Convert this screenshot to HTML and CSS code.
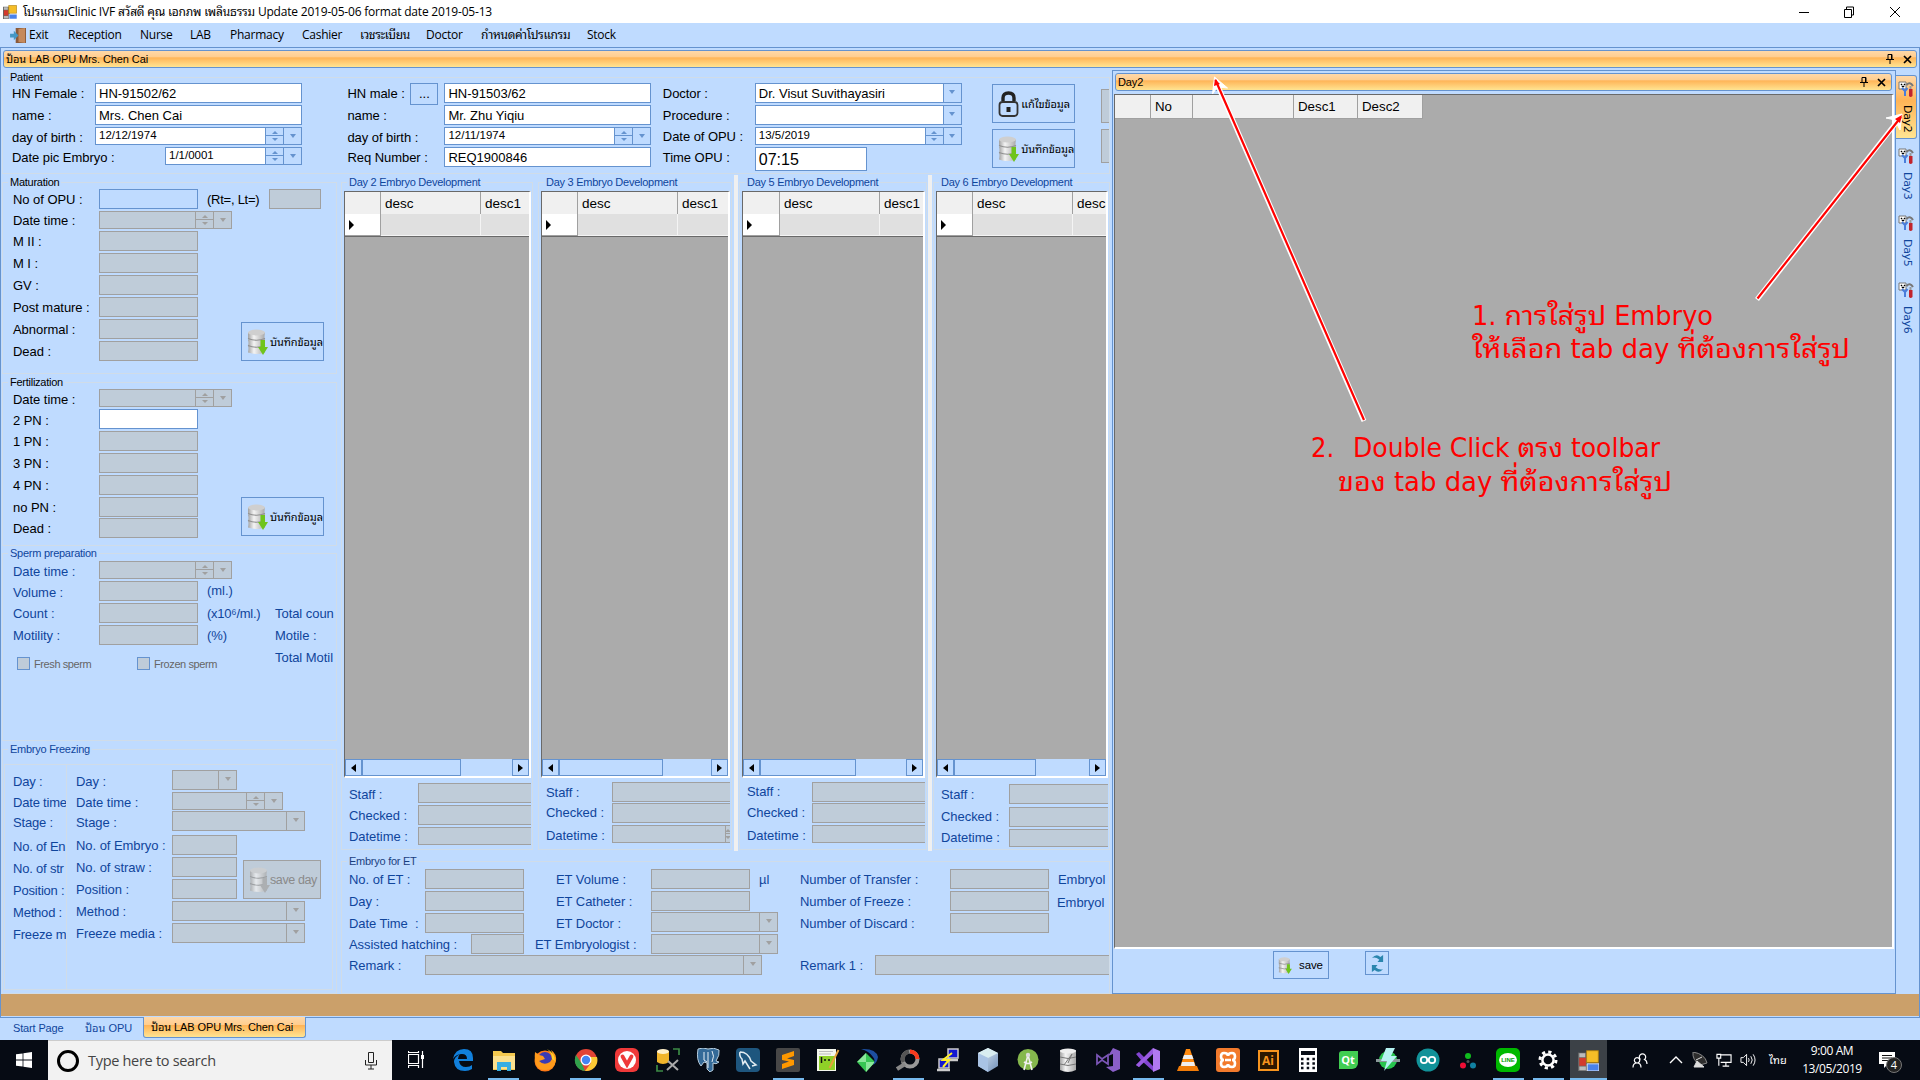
FILE: index.html
```html
<!DOCTYPE html>
<html lang="th">
<head>
<meta charset="utf-8">
<title>Clinic IVF</title>
<link rel="stylesheet" href="styles.css">
</head>
<body>
<svg width="0" height="0" class="defs">
  <defs>
    <linearGradient id="metal"><stop offset="0" stop-color="#a2a2a2"/><stop offset=".35" stop-color="#f4f4f4"/><stop offset="1" stop-color="#a8a8a8"/></linearGradient>
    <linearGradient id="cube" x2="1" y2="1"><stop offset="0" stop-color="#e8f2fb"/><stop offset="1" stop-color="#6f8fb8"/></linearGradient>
    <symbol id="db" viewBox="0 0 21 26">
      <path d="M1 3.500v6q1 1 0 1.500 1 3 0 6 1 1 0 6.500 8 3 17 0v-6q-1-1 0-1.500-1-3 0-6-1-1 0-6.500z" fill="url(#metal)"/>
      <path d="M1 9.500q8.500 3.500 17 0M1 16.500q8.500 3.500 17 0" fill="none" stroke="#8f8f8f" stroke-width="1.200"/>
      <ellipse cx="9.500" cy="3.500" rx="8.500" ry="3" fill="#cfcfcf"/>
      <path class="down" d="M13.500 11h4.500v7h3l-5 8-5-8h2.500z"/>
    </symbol>
    <symbol id="tools" viewBox="0 0 16 16">
      <path d="M1 1h7v7H1z" fill="#fff" stroke="#777"/><path d="M3 3h1v1H3zM6 3h1v1H6zM4 5h2v1H4z" fill="#000" stroke="#000" stroke-width=".5"/>
      <path d="M4 7l3 3v5M9.500 7L7 10" fill="none" stroke="#4a7ddb" stroke-width="2"/><path d="M8.500 4q3.500-4 6.500 1" fill="none" stroke="#777" stroke-width="2"/><path d="M11.500 5h2v3h-2z" fill="#999"/><path d="M11 8h3.500v7q-2 2-3.500 0z" fill="#c2242c"/>
    </symbol>
    <symbol id="pin" viewBox="0 0 8 10"><path d="M2 .5h4v5H2zM5.500 1v4M0 5.500h8M4 6v4" fill="none" stroke="#000"/></symbol>
    <symbol id="close" viewBox="0 0 9 9"><path d="M1 1l7 7M8 1L1 8" stroke="#000" stroke-width="1.700"/></symbol>
    <symbol id="form" viewBox="0 0 16 16"><path d="M0 2h8v14H0z" fill="#666"/><path d="M1 2.500h4.500v3H1zM1 12.500h5v3H1z" fill="#bbb"/><path d="M1 6h5v6H1z" fill="#d33a2c"/><path d="M6.500.5h9v9h-9z" fill="#f5bd27" stroke="#a77b12" stroke-width=".7"/><path d="M7 10.500h9V16H7z" fill="#4a82ea" stroke="#fff" stroke-width=".6"/></symbol>
  </defs>
</svg>

<header class="titlebar">
  <svg class="app-ico"><use href="#form"/></svg>
  <span class="title">โปรแกรมClinic IVF สวัสดี คุณ เอกภพ เพลินธรรม Update 2019-05-06 format date 2019-05-13</span>
  <svg class="winbtn" viewBox="0 0 110 20"><path d="M4 10.500h10M49.500 7.500h7v8h-7zM51.500 7v-2h7v8H57M95 5l10 10M105 5L95 15" fill="none" stroke="#000"/></svg>
</header>

<nav class="menu">
  <svg class="exit" viewBox="0 0 18 16"><path d="M6 0h11v16H6z" fill="#8a5a3a"/><path d="M9 1l7-1v16l-7-1z" fill="#c58a5c"/><path d="M0 6h4V3l5 5-5 5v-3H0z" fill="#4597c4"/></svg>
  <span>Exit</span><span>Reception</span><span>Nurse</span><span>LAB</span><span>Pharmacy</span><span>Cashier</span><span class="th">เวชระเบียน</span><span>Doctor</span><span class="th">กำหนดค่าโปรแกรม</span><span>Stock</span>
</nav>

<main class="window">
  <div class="caption main-cap"><span>ป้อน LAB OPU Mrs. Chen Cai</span><svg class="pin"><use href="#pin"/></svg><svg class="x"><use href="#close"/></svg></div>
  <div class="body">
    <section class="left">
      <fieldset class="patient black"><legend>Patient</legend>
        <div class="prow">
          <div class="pform female">
            <label>HN Female :</label><div class="f">HN-91502/62</div>
            <label class="d1">name :</label><div class="f">Mrs. Chen Cai</div>
            <label class="d1">day of birth :</label><div class="f date">12/12/1974<i class="spin"></i><i class="drop"></i></div>
            <label class="wide d1">Date pic Embryo :</label><div class="f date pic">1/1/0001<i class="spin"></i><i class="drop"></i></div>
          </div>
          <div class="pform male">
            <label>HN male :</label><button class="dots">...</button><div class="f">HN-91503/62</div>
            <label class="d1">name :</label><b></b><div class="f">Mr. Zhu Yiqiu</div>
            <label class="d1">day of birth :</label><b></b><div class="f date">12/11/1974<i class="spin"></i><i class="drop"></i></div>
            <label class="wide2 d1">Req Number :</label><div class="f">REQ1900846</div>
          </div>
          <div class="pform doctor">
            <label>Doctor :</label><div class="f combo">Dr. Visut Suvithayasiri<i class="drop"></i></div>
            <label class="d1">Procedure :</label><div class="f combo"><i class="drop"></i></div>
            <label class="d0">Date of OPU :</label><div class="f date">13/5/2019<i class="spin"></i><i class="drop"></i></div>
            <label class="d1">Time OPU :</label><div class="f time">07:15</div>
          </div>
          <div class="pbtns">
            <button class="btn"><svg class="ico" viewBox="0 0 21 26"><path d="M5 10V7q0-5 5.500-5T16 7v3" fill="none" stroke="#222" stroke-width="3.400"/><rect x="1.500" y="11" width="18" height="14" rx="3" fill="none" stroke="#333" stroke-width="1.800"/><path d="M8.500 16h4v5h-4z" fill="#222"/></svg><span>แก้ไขข้อมูล</span></button>
            <button class="btn"><svg class="ico"><use href="#db"/></svg><span>บันทึกข้อมูล</span></button>
          </div>
          <div class="cut"><i></i><i></i></div>
        </div>
      </fieldset>

      <div class="work">
        <div class="col">
          <fieldset class="mat black"><legend>Maturation</legend>
            <div class="side">
              <div class="form matf">
                <label>No of OPU :</label><div class="f open"></div>
                <label>Date time :</label><div class="f date dis"><i class="spin"></i><i class="drop"></i></div>
                <label>M II :</label><div class="f dis"></div>
                <label>M I :</label><div class="f dis"></div>
                <label>GV :</label><div class="f dis"></div>
                <label>Post mature :</label><div class="f dis"></div>
                <label>Abnormal :</label><div class="f dis"></div>
                <label>Dead :</label><div class="f dis"></div>
              </div>
              <div class="aside">
                <div class="rt"><label>(Rt=, Lt=)</label><div class="f dis"></div></div>
                <button class="btn"><svg class="ico"><use href="#db"/></svg><span>บันทึกข้อมูล</span></button>
              </div>
            </div>
          </fieldset>
          <fieldset class="fert black"><legend>Fertilization</legend>
            <div class="side">
              <div class="form fertf">
                <label class="d1">Date time :</label><div class="f date dis"><i class="spin"></i><i class="drop"></i></div>
                <label class="d2">2 PN :</label><div class="f"></div>
                <label>1 PN :</label><div class="f dis"></div>
                <label>3 PN :</label><div class="f dis"></div>
                <label>4 PN :</label><div class="f dis"></div>
                <label>no PN :</label><div class="f dis"></div>
                <label>Dead :</label><div class="f dis"></div>
              </div>
              <div class="aside"><button class="btn"><svg class="ico"><use href="#db"/></svg><span>บันทึกข้อมูล</span></button></div>
            </div>
          </fieldset>
          <fieldset class="sperm"><legend>Sperm preparation</legend>
            <div class="form spermf">
              <label class="d1">Date time :</label><div class="f date dis"><i class="spin"></i><i class="drop"></i></div><b></b><b></b>
              <label class="d2">Volume :</label><div class="f dis"></div><label class="d0">(ml.)</label><b></b>
              <label>Count :</label><div class="f dis"></div><label class="unit">(x10⁶/ml.)</label><label>Total coun</label>
              <label>Motility :</label><div class="f dis"></div><label>(%)</label><label>Motile :</label>
              <div class="checks"><i></i><span>Fresh sperm</span><i></i><span>Frozen sperm</span></div><label>Total Motil</label>
            </div>
          </fieldset>
          <fieldset class="freeze"><legend>Embryo Freezing</legend>
            <div class="panes">
              <div class="pane labels"><label>Day :</label><label>Date time</label><label>Stage :</label><label>No. of En</label><label>No. of str</label><label>Position :</label><label>Method :</label><label>Freeze m</label></div>
              <div class="pane second">
                <div class="form frf">
                  <label class="d2">Day :</label><div class="f dis combo"><i class="drop"></i></div>
                  <label>Date time :</label><div class="f dis date"><i class="spin"></i><i class="drop"></i></div>
                  <label class="d2">Stage :</label><div class="f dis combo lg"><i class="drop"></i></div>
                  <label>No. of Embryo :</label><div class="f dis"></div>
                  <label>No. of straw :</label><div class="f dis"></div>
                  <label>Position :</label><div class="f dis"></div>
                  <label>Method :</label><div class="f dis combo lg"><i class="drop"></i></div>
                  <label>Freeze media :</label><div class="f dis combo lg"><i class="drop"></i></div>
                </div>
                <button class="btn off"><svg class="ico"><use href="#db"/></svg><span>save day</span></button>
              </div>
            </div>
          </fieldset>
        </div>

        <div class="right-col">
          <div class="days">
            <fieldset class="day g1"><legend>Day 2 Embryo Development</legend>
              <div class="dgv"><div class="hd"><i></i><span>desc</span><span>desc1</span></div><div class="rw"><i></i><span></span><span></span></div><div class="void"></div>
                <div class="sb"><i class="l"></i><i class="thumb"></i><i class="r"></i></div></div>
              <div class="sign"><label class="d2">Staff :</label><div class="f dis"></div><label>Checked :</label><div class="f dis"></div><label>Datetime :</label><div class="f dis date"></div></div>
            </fieldset>
            <fieldset class="day g2"><legend>Day 3 Embryo Development</legend>
              <div class="dgv"><div class="hd"><i></i><span>desc</span><span>desc1</span></div><div class="rw"><i></i><span></span><span></span></div><div class="void"></div>
                <div class="sb"><i class="l"></i><i class="thumb"></i><i class="r"></i></div></div>
              <div class="sign"><label>Staff :</label><div class="f dis"></div><label class="d0">Checked :</label><div class="f dis"></div><label>Datetime :</label><div class="f dis date"><i class="spin"></i></div></div>
            </fieldset>
            <div class="split"></div>
            <fieldset class="day g3"><legend>Day 5 Embryo Development</legend>
              <div class="dgv"><div class="hd"><i></i><span>desc</span><span>desc1</span></div><div class="rw"><i></i><span></span><span></span></div><div class="void"></div>
                <div class="sb"><i class="l"></i><i class="thumb"></i><i class="r"></i></div></div>
              <div class="sign"><label class="d0">Staff :</label><div class="f dis"></div><label class="d0">Checked :</label><div class="f dis"></div><label>Datetime :</label><div class="f dis date"></div></div>
            </fieldset>
            <div class="split"></div>
            <fieldset class="day g4"><legend>Day 6 Embryo Development</legend>
              <div class="dgv"><div class="hd"><i></i><span>desc</span><span>desc</span></div><div class="rw"><i></i><span></span><span></span></div><div class="void"></div>
                <div class="sb"><i class="l"></i><i class="thumb"></i><i class="r"></i></div></div>
              <div class="sign"><label>Staff :</label><div class="f dis"></div><label class="d0">Checked :</label><div class="f dis"></div><label class="up">Datetime :</label><div class="f dis date"></div></div>
            </fieldset>
          </div>
          <fieldset class="et"><legend>Embryo for ET</legend>
            <div class="etg">
              <label>No. of ET :</label><div class="f dis"></div><label>ET Volume :</label><div class="f dis"></div><label>µl</label><label>Number of Transfer :</label><div class="f dis"></div><label>Embryol</label>
              <label>Day :</label><div class="f dis"></div><label>ET Catheter :</label><div class="f dis"></div><b></b><label>Number of Freeze :</label><div class="f dis"></div><label class="emb2">Embryol</label>
              <label>Date Time &nbsp;:</label><div class="f dis"></div><label>ET Doctor :</label><div class="f dis combo"><i class="drop"></i></div><label>Number of Discard :</label><div class="f dis"></div><b></b>
            </div>
            <div class="et4"><label>Assisted hatching :</label><div class="f dis"></div><label>ET Embryologist :</label><div class="f dis combo"><i class="drop"></i></div></div>
            <div class="et5"><label>Remark :</label><div class="f dis combo"><i class="drop"></i></div><label>Remark 1 :</label><div class="f dis last"></div></div>
          </fieldset>
        </div>
      </div>
    </section>

    <section class="dock">
      <div class="caption"><span>Day2</span><svg class="pin"><use href="#pin"/></svg><svg class="x"><use href="#close"/></svg></div>
      <div class="big"><div class="bighd"><i></i><span>No</span><span></span><span>Desc1</span><span>Desc2</span></div></div>
      <div class="dockbtns">
        <button class="btn save"><svg class="ico"><use href="#db"/></svg><span>save</span></button>
        <button class="btn ref"><svg viewBox="0 0 16 18"><path d="M2 3q5-5 9-1l3-2v7.500H8L10 5Q6 1.500 2 3zM14 15q-5 5-9 1l-3 2v-7.500h6L6 13q4 3.500 8 2z" fill="#2b86ae"/></svg></button>
      </div>
    </section>
    <aside class="vtabs">
      <div class="vt on"><svg><use href="#tools"/></svg><span>Day2</span></div>
      <div class="vt"><svg><use href="#tools"/></svg><span>Day3</span></div>
      <div class="vt"><svg><use href="#tools"/></svg><span>Day5</span></div>
      <div class="vt"><svg><use href="#tools"/></svg><span>Day6</span></div>
    </aside>
  </div>
  <div class="brown"></div>
</main>
<div class="tabs"><span class="t1">Start Page</span><span class="t2">ป้อน OPU</span><span class="t3">ป้อน LAB OPU Mrs. Chen Cai</span></div>

<footer class="taskbar">
  <div class="start"><svg viewBox="0 0 16 16"><path d="M0 2.300L6.600 1.400V7.600H0zM7.400 1.300L16 0V7.600H7.400zM0 8.400h6.600v6.200L0 13.700zM7.400 8.400H16V16l-8.600-1.300z" fill="#fff"/></svg></div>
  <div class="search"><i class="ring"></i><span>Type here to search</span><svg viewBox="0 0 12 18"><path d="M3.500.5h5v10h-5zM.5 8v5h11V8M6 13v4M3 17h6" fill="none" stroke="#222"/></svg></div>
  <div class="tv"><svg viewBox="0 0 17 17"><path d="M.5 3.500h10v9H.5zM.5 0v1.500h10V0M.5 17v-2.500h10V17M14.500 0v17" fill="none" stroke="#fff" stroke-width="1.200"/><path d="M13 4h3v4h-3z" fill="#fff"/></svg></div>
  <div class="apps five">
    <div class="a"><svg viewBox="0 0 24 24"><path d="M2 11Q4 1 13 1q9 0 9 9v3H8q1 6 7 6 4 0 6-2v4q-3 2-7 2-10 0-11-9 0-5 6-8-2 2-2 5h9q0-5-5-5-6 0-9 5z" fill="#1180dc"/></svg></div>
    <div class="a u"><svg viewBox="0 0 24 24"><path d="M1 3h8l2 2h12v17H1z" fill="#f4c94f"/><path d="M1 8h22v13H1z" fill="#fbe08d"/><path d="M5 23v-9h14v9h-4v-4H9v4z" fill="#38aee3"/></svg></div>
    <div class="a"><svg viewBox="0 0 24 24"><circle cx="12" cy="13" r="10.500" fill="#ff7a16"/><circle cx="12" cy="11" r="7" fill="#3a3bb4"/><path d="M2 4q3 3 8 4l2 3-6 2q5 5 11 1 5-5 1-12 6 4 5 11-2 9-11 9Q0 22 2 4z" fill="#ff9a1b"/><path d="M14 1q8 4 8 12l-3-2q0-6-5-10z" fill="#ffd02b"/></svg></div>
    <div class="a u"><svg viewBox="0 0 24 24"><circle cx="12" cy="12" r="11" fill="#e24335"/><path d="M2 7l6 9 3 7A11 11 0 0 1 2 7z" fill="#30a24c"/><path d="M23 9H12l5 6-6 8A11 11 0 0 0 23 9z" fill="#fcc934"/><circle cx="12" cy="12" r="5.500" fill="#fff"/><circle cx="12" cy="12" r="4.200" fill="#4484f3"/></svg></div>
    <div class="a"><svg viewBox="0 0 24 24"><rect width="24" height="24" rx="6" fill="#ef3939"/><circle cx="12" cy="12" r="9" fill="#fff"/><path d="M7.500 8.500l4.500 8 4.500-8" fill="none" stroke="#ef3939" stroke-width="3.800" stroke-linecap="round"/></svg></div>
  </div>
  <div class="apps">
    <div class="a"><svg viewBox="0 0 24 24"><path d="M1 3v11q6 4 12 0V3z" fill="#f1b52b"/><ellipse cx="7" cy="3.500" rx="6" ry="2.500" fill="#fff0c8"/><path d="M17 1h6v6M1 17v6h6" fill="none" stroke="#3c8b45" stroke-width="1.700"/><path d="M11 22L22 12M12 13l10 9" stroke="#aaa" stroke-width="2"/></svg></div>
    <div class="a"><svg viewBox="0 0 24 24"><path d="M2 1q5-2 10 0 6-2 11 1 1 5-3 11l3 1q-3 3-6 1v7l-3 2-3-3v-6l-3-1-3 4Q0 12 2 1z" fill="#346a98" stroke="#b7cddd"/><path d="M8 4v8l3 2M16 3q3 5 0 11M12 4v16" fill="none" stroke="#e5eef5"/></svg></div>
    <div class="a"><svg viewBox="0 0 24 24"><rect width="24" height="24" rx="4" fill="#1e567e"/><path d="M4 4q8 0 11 9l5 4-4 1M4 4q-1 4 2 7l1 5 2-3 5 8" fill="none" stroke="#e4edf2" stroke-width="1.500"/></svg></div>
    <div class="a u"><svg viewBox="0 0 24 24"><rect width="24" height="24" rx="2" fill="#474747"/><path d="M6 7l12-4v5l-7 2.500 7 1.500v5L6 21v-5l7-2.500L6 12z" fill="#ff9800"/></svg></div>
    <div class="a"><svg viewBox="0 0 24 24"><path d="M1 1h19v22H1z" fill="#f4f7ed"/><path d="M3 8h16v14H3z" fill="#8fd127"/><path d="M3 3.500h14M3 6h12" stroke="#bbb"/><path d="M5.500 9v6M8 12h2M12 12h2" stroke="#111" stroke-width="1.500"/><path d="M22.500 2l-9 18" stroke="#e6a33c" stroke-width="2"/></svg></div>
    <div class="a"><svg viewBox="0 0 24 24"><path d="M10 5l9 9-9 10-9-10z" fill="#37c653"/><path d="M10 5v9H1zM19 14h-9v10z" fill="#8be89a"/><path d="M5 1q15-1 17 8-1 6-5 8 3-5 0-8-4-6-12-8z" fill="#1d4e9f"/></svg></div>
    <div class="a u"><svg viewBox="0 0 24 24"><circle cx="14" cy="11" r="7.500" fill="none" stroke="#999" stroke-width="4"/><path d="M9 16L1 21" stroke="#888" stroke-width="4"/><path d="M7.500 14A7.500 7.500 0 0 1 13 3.500" fill="none" stroke="#555" stroke-width="4"/><path d="M14 3.500a7.500 7.500 0 0 1 7.500 7.500" fill="none" stroke="#fb3a1d" stroke-width="4"/></svg></div>
    <div class="a"><svg viewBox="0 0 24 24"><path d="M12 1h10v9H12zM3 11h10v9H3z" fill="#1418d0" stroke="#ccc" stroke-width="1.500"/><path d="M10 12h12M1 22h13" stroke="#ccc" stroke-width="2.500"/><path d="M16 5L7 12h6l-6 7" fill="none" stroke="#ffef2a" stroke-width="2"/></svg></div>
    <div class="a"><svg viewBox="0 0 24 24"><path d="M12 0l10 5v13l-10 6-10-6V5z" fill="url(#cube)"/><path d="M12 0l10 5-10 5L2 5z" fill="#d9edf0"/><path d="M12 10v14L2 18V5z" fill="#a9c3e4"/></svg></div>
    <div class="a"><svg viewBox="0 0 24 24"><circle cx="12" cy="11.500" r="10.500" fill="#85b84d"/><path d="M12 7L8 22M12 7l4 15M8 14q4 3 8 0" fill="none" stroke="#f1f1f1" stroke-width="1.600"/><circle cx="12" cy="7" r="2.200" fill="#ddd"/></svg></div>
    <div class="a"><svg viewBox="0 0 24 24"><path d="M4 2v20q8 4 16 0V2z" fill="url(#metal)"/><ellipse cx="12" cy="3" rx="8" ry="2.500" fill="#eee"/><path d="M8 17l8-11-4 9M4 9q8 3 16 0M4 16q8 3 16 0" fill="none" stroke="#777"/></svg></div>
    <div class="a"><svg viewBox="0 0 24 24"><path d="M17 0l7 3v18l-7 3-7-5 7-1V6l-5 2z" fill="#8a5fc8"/><path d="M1 7l5 4 6-4v9l-6-4-5 4z" fill="none" stroke="#7a55b5" stroke-width="1.800"/></svg></div>
    <div class="a u"><svg viewBox="0 0 24 24"><path d="M0 6l3-2 14 14v5L7 14l-4 5-3-2 5-5z" fill="#8345d2"/><path d="M3 19L17 6V0L0 17z" fill="#9a5be2"/><path d="M17 0l7 3v18l-7 3z" fill="#b179f1"/></svg></div>
    <div class="a"><svg viewBox="0 0 24 24"><path d="M10 1h4l6 18H4z" fill="#ff8a0e"/><path d="M8 7h8l1.500 4h-11zM6 14h12l1 4H5z" fill="#eee"/><path d="M3 18h18l2 5H1z" fill="#f07b08"/></svg></div>
    <div class="a"><svg viewBox="0 0 24 24"><rect width="24" height="24" rx="3" fill="#f27a2c"/><path d="M8 5q4 0 4 3 0-3 4-3 3 0 3 3.500T16 12q3 0 3 3.500T16 19q-4 0-4-3 0 3-4 3-3 0-3-3.500T8 12q-3 0-3-3.500T8 5zM9 12h6" fill="none" stroke="#fff" stroke-width="2.600"/></svg></div>
    <div class="a"><div class="ai">Ai</div></div>
    <div class="a"><svg viewBox="0 0 24 24"><path d="M3 0h18v24H3z" fill="#fff"/><path d="M5 3h14v4H5z" fill="#080d16"/><path d="M5 11h14M5 15.500h14M5 20h14" stroke="#080d16" stroke-width="2.500" stroke-dasharray="2.500 3.200"/></svg></div>
    <div class="a"><div class="qt">Qt</div></div>
    <div class="a"><svg viewBox="0 0 24 24"><circle cx="12" cy="12" r="9" fill="#27c54e"/><path d="M0 11h24v3H0z" fill="#899"/><path d="M10 0h9l-4 8h6L8 23l3-10H5z" fill="#b5f3f2"/></svg></div>
    <div class="a"><svg viewBox="0 0 24 24"><circle cx="12" cy="12" r="11.500" fill="#119299"/><circle cx="8" cy="12" r="3.200" fill="none" stroke="#fff" stroke-width="1.800"/><circle cx="16" cy="12" r="3.200" fill="none" stroke="#fff" stroke-width="1.800"/></svg></div>
    <div class="a"><svg viewBox="0 0 24 24"><circle cx="12" cy="8" r="3" fill="#10bc1e"/><circle cx="7" cy="17.500" r="3" fill="#f00e35"/><circle cx="17" cy="17.500" r="3" fill="#1181a1"/><circle cx="12" cy="13.500" r="1.500" fill="#555"/></svg></div>
    <div class="a u"><div class="line"><span>LINE</span></div></div>
    <div class="a u"><svg viewBox="0 0 24 24"><circle cx="12" cy="12" r="8" fill="none" stroke="#fff" stroke-width="3" stroke-dasharray="3.200 3.080"/><circle cx="12" cy="12" r="5.600" fill="none" stroke="#fff" stroke-width="2.500"/></svg></div>
    <div class="a u active"><svg><use href="#form"/></svg></div>
  </div>
  <div class="tray">
    <svg class="tr" viewBox="0 0 16 16"><path d="M8.500 7.500a3.200 3.200 0 1 1 4 0q2.500 1 2.500 4.500M1 15.500q0-4.500 4-4.500t4 4.500M5 11a2.700 2.700 0 1 1 .1 0" fill="none" stroke="#fff" stroke-width="1.200"/></svg>
    <svg class="tr chev" viewBox="0 0 16 16"><path d="M2 11l6-6 6 6" fill="none" stroke="#fff" stroke-width="1.400"/></svg>
    <svg class="tr" viewBox="0 0 16 16"><path d="M1 0q12 2 14 11l-7 2Q0 8 1 0z" fill="#2d2d2d" stroke="#888"/><path d="M4 8l6-3M2 15l3-6 7 6z" fill="#ddd" stroke="#ddd"/></svg>
    <svg class="tr net" viewBox="0 0 17 16"><path d="M5 2.500h11v8H5M10.500 11v3.500M7 14.500h7M1 2h4v4H1zM3 6v8" fill="none" stroke="#fff" stroke-width="1.200"/></svg>
    <svg class="tr" viewBox="0 0 17 16"><path d="M1 5.500h2.500L7 2v12l-3.500-3.500H1zM9 6q1.500 2 0 4M11.500 4q3 4 0 8M14 2q4 6 0 12" fill="none" stroke="#fff"/></svg>
    <span class="lang">ไทย</span>
    <div class="clock"><span>9:00 AM</span><span>13/05/2019</span></div>
    <div class="note"><svg viewBox="0 0 16 16"><path d="M0 0h16v12H9l-4 4v-4H0z" fill="#fff"/><path d="M3 3.500h10M3 6h10M3 8.500h10" stroke="#111"/></svg><b>4</b></div>
  </div>
</footer>

<svg class="notes" viewBox="0 0 1920 1080">
  <g fill="none" stroke="#fff" stroke-width="5"><path d="M1757 299.500L1899 119"/><path d="M1364 421L1217 84"/></g>
  <path d="M1902 114l-16 4 9 2 5 10zM1214.500 77l-2 17 5-7 10 1z" fill="#fff" stroke="#fff"/>
  <g fill="none" stroke="#f00" stroke-width="2.200"><path d="M1757.500 298.500L1901 117M1364 420L1215.500 80"/></g>
  <path d="M1902 115l-7 4 5 4zM1215 79l-1 7 6-2z" fill="#f00"/>
  <g class="ann">
    <text x="1472" y="325" textLength="241" lengthAdjust="spacingAndGlyphs">1. การใส่รูป Embryo</text>
    <text x="1472" y="358" textLength="378" lengthAdjust="spacingAndGlyphs">ให้เลือก tab day ที่ต้องการใส่รูป</text>
    <text x="1311" y="457">2.</text><text x="1353" y="457" textLength="307" lengthAdjust="spacingAndGlyphs">Double Click ตรง toolbar</text>
    <text x="1338" y="490.500" textLength="334" lengthAdjust="spacingAndGlyphs">ของ tab day ที่ต้องการใส่รูป</text>
  </g>
</svg>
</body>
</html>
```

FILE: styles.css
```css
* { box-sizing: border-box; }
body { margin: 0; width: 1920px; height: 1080px; overflow: hidden; background: #bfdbff; font: 13px/20px "Liberation Sans", "Noto Sans Thai Looped", "Loma", "Garuda", "Noto Sans Thai", sans-serif; color: #0f459c; display: flex; flex-direction: column; position: relative; }
i { font-style: normal; }
button { font: inherit; margin: 0; }
.defs { position: absolute; }
label { white-space: nowrap; height: 20px; display: block; padding-top: 1px; letter-spacing: -.05px; }
.d0 { padding-top: 0; }
.d1 { padding-top: 1px; }
.d2 { padding-top: 2px; }
.up { margin-top: -2px; }
.black { color: #000; }

.titlebar { height: 23px; background: #fff; display: flex; align-items: center; padding-left: 3px; color: #000; font: 12px/23px "Open Sans", "Noto Sans Thai Looped", "Loma", "Garuda", "Noto Sans Thai", sans-serif; flex: none; }
.app-ico { width: 14px; height: 14px; margin-right: 6px; }
.title { flex: 1; letter-spacing: -.2px; white-space: nowrap; }
.winbtn { width: 110px; height: 20px; margin-right: 15px; }
.menu { height: 24px; display: grid; grid-template-columns: 19px 39px 72px 50px 40px 72px 58px 66px 55px 106px 60px; padding: 0 0 0 10px; font: 12px/24px "Open Sans", "Noto Sans Thai Looped", "Loma", "Garuda", "Noto Sans Thai", sans-serif; letter-spacing: -.25px; color: #000; white-space: nowrap; flex: none; }
.menu .th { letter-spacing: -.35px; }
.exit { width: 17px; height: 15px; margin-top: 5px; }

.window { height: 971px; border: 1px solid #6593cf; display: flex; flex-direction: column; padding: 2px 0 1px; flex: none; }
.caption { height: 18px; border: 1px solid #6593cf; border-radius: 3px; background: linear-gradient(#ffd8a8 0, #ffcd8e 38%, #ffb457 42%, #ffe492 100%); color: #000; font-size: 11px; line-height: 15px; display: flex; align-items: center; padding: 0 3px; letter-spacing: -.1px; flex: none; }
.caption span { flex: 1; white-space: nowrap; margin-left: -1px; }
.main-cap { margin: 0 2px; }
.main-cap .x { margin-right: 1px; }
.pin { width: 8px; height: 10px; margin-right: 9px; }
.x { width: 9px; height: 9px; margin-right: 2px; }
.body { height: 926px; display: flex; flex: none; }
.brown { height: 22px; background: #cba06a; flex: none; }

fieldset { margin: 0; padding: 0; border: 1px solid #d0dce8; min-width: 0; overflow: hidden; }
legend { margin-left: 5px; padding: 0 2px; font-size: 11px; line-height: 12px; height: 12px; letter-spacing: -.26px; white-space: nowrap; }

.f { height: 20px; background: #fff; border: 1px solid #6593cf; color: #000; display: flex; align-items: stretch; justify-content: flex-end; line-height: 19px; padding-left: 3px; white-space: nowrap; overflow: hidden; --a: #6593cf; --b: #bfdbff; }
.f:not(:has(i)) { justify-content: flex-start; }
.f.date { height: 18px; font-size: 11.500px; line-height: 15px; }
.f.dis { background: #bfccd9; border-color: #a0a0a0; --a: #a0a0a0; --b: #bfccd9; }
.f.open { background: #bfdbff; }
.f.time { height: 24px; font-size: 16px; line-height: 23px; }
.f > i:first-of-type { margin-left: auto; }
.drop, .spin { width: 18px; border-left: 1px solid var(--a); background: var(--b); display: flex; flex-direction: column; align-items: center; flex: none; }
.drop::before { content: ""; border: 3px solid transparent; border-top: 4px solid var(--a); border-bottom: 0; margin-top: 6px; }
.spin { background: linear-gradient(var(--a), var(--a)) 0 7px / 100% 1px no-repeat var(--b); }
.spin::before { content: ""; border: 3px solid transparent; border-bottom: 3px solid var(--a); border-top: 0; margin-top: 3px; }
.spin::after { content: ""; border: 3px solid transparent; border-top: 3px solid var(--a); border-bottom: 0; margin-top: 4px; }

.btn { height: 39px; width: 83px; border: 1px solid #6593cf; background: #bfdbff; padding: 0 0 0 5px; display: flex; align-items: center; font-size: 11px; color: #000; }
.btn span { white-space: nowrap; letter-spacing: -.1px; }
.ico { width: 21px; height: 26px; flex: none; margin-right: 2px; }
.down { fill: #6fc41c; }
.btn.off { background: #bfccd9; border-color: #a0a0a0; color: #8a8a8a; font-size: 12.500px; }
.btn.off span { letter-spacing: -.4px; }
.off .ico { filter: grayscale(1); opacity: .75; margin-right: 0; }

.left { width: 1110px; padding: 3px 0 0 1px; flex: none; display: flex; flex-direction: column; }
.patient { width: 1108px; height: 103px; flex: none; }
.prow { display: flex; height: 90px; padding-left: 9px; }
.pform { display: grid; grid-template-rows: 22px 22px 20px 24px; align-content: start; }
.female { grid-template-columns: 83px 207px; width: 336px; }
.female .wide { grid-column: 1; }
.pic { margin-left: 70px; }
.male { grid-template-columns: 63px 34px 207px; width: 316px; }
.wide2 { grid-column: span 2; }
.dots { width: 28px; height: 22px; border: 1px solid #6593cf; background: #bfdbff; padding: 0; line-height: 18px; }
.doctor { grid-template-columns: 92px 207px; width: 330px; }
.time { width: 112px; }
.pbtns { width: 109px; display: grid; gap: 6px; padding-top: 1px; align-content: start; }
.cut { display: grid; grid-template-rows: 34px 34px; gap: 6px; padding-top: 6px; width: 8px; }
.cut i { border: 1px solid #a0a0a0; border-right: 0; background: #bfccd9; }

.work { display: flex; padding-top: 2px; gap: 4px; }
.col { width: 335px; flex: none; }
.mat { height: 198px; margin-bottom: 2px; }
.fert { height: 170px; margin-bottom: 1px; }
.sperm { height: 194px; margin-bottom: 2px; }
.freeze { height: 251px; }
.side { display: flex; padding-top: 1px; }
.form { display: grid; grid-template-columns: 86px 99px; padding-left: 10px; align-content: start; }
.matf { grid-template-rows: 22px 20px 22px 22px 22px 22px 22px 20px; }
.matf label:nth-of-type(2) { margin-top: -1px; }
.form .date { width: 133px; position: relative; }
.aside { width: 130px; padding-left: 9px; display: flex; flex-direction: column; }
.rt { display: grid; grid-template-columns: 62px 52px; height: 20px; }
.rt label { letter-spacing: -.25px; }
.side .btn { margin-left: 34px; }
.rt + .btn { margin-top: 113px; }
.fertf { grid-template-rows: 20px 22px 22px 22px 22px 21px 20px; }
.fert .btn { margin-top: 108px; }
.spermf { padding-top: 2px; grid-template-columns: 86px 108px 68px 60px; grid-template-rows: 20px 22px 22px 22px 20px; }
.spermf .f:not(.date) { width: 99px; }
.unit { letter-spacing: -.25px; }
.checks { grid-column: span 3; display: grid; grid-template-columns: 17px 103px 17px 80px; margin-left: 4px; font-size: 11px; letter-spacing: -.4px; color: #666; padding-top: 10px; line-height: 14px; height: 26px; white-space: nowrap; }
.checks i { width: 13px; height: 13px; border: 1px solid #6593cf; background: #bfccd9; }
.panes { display: flex; margin: 9px 0 0 1px; height: 226px; width: 329px; }
.pane { border: 1px solid #d0dce8; }
.labels { width: 62px; overflow: hidden; display: grid; grid-template-rows: 21px 20px 24px 22px 22px 22px 22px 22px; padding: 6px 0 0 8px; flex: none; align-content: start; border-right: 0; }
.labels label { letter-spacing: -.2px; }
.second { flex: 1; display: flex; padding-top: 5px; }
.frf { padding-left: 9px; width: 176px; flex: none; grid-template-columns: 96px 65px; grid-template-rows: 22px 19px 24px 22px 22px 22px 22px 22px; }
.frf .date { width: 111px; }
.frf .lg { width: 133px; }
.second .btn { width: 78px; margin: 90px 0 0 0; }

.right-col { width: 769px; }
.days { display: flex; height: 674px; }
.split { width: 4px; background: #f0f0f0; flex: none; margin-top: -1px; height: 676px; }
.day { height: 674px; flex: none; }
.g1 { width: 192px; margin-right: 5px; --th: 99px; --lab: 74px; }
.g2 { width: 194px; margin-right: 2px; --th: 104px; --lab: 71px; }
.g3 { width: 188px; margin: 0 1px; --th: 96px; --lab: 70px; }
.g4 { width: 177px; margin-left: 1px; --th: 82px; --lab: 73px; }
.dgv { margin: 3px 1px 0 2px; height: 587px; border: 1px solid #696969; border-right: 2px solid #fff; border-bottom: 2px solid #fff; display: flex; flex-direction: column; background: #ababab; overflow: hidden; }
.hd, .rw { display: grid; grid-template-columns: 36px 100px 100px; height: 22px; flex: none; font-size: 13.500px; line-height: 24px; color: #000; }
.g3 .hd, .g3 .rw { grid-template-columns: 37px 100px 100px; }
.hd > * { background: #f0f0f0; border-right: 1px solid #a0a0a0; border-bottom: 1px solid #a0a0a0; padding-left: 4px; }
.rw { height: 23px; border-bottom: 1px solid #696969; }
.rw > * { background: #e0e0e0; border-right: 1px solid #f4f4f4; border-bottom: 1px solid #f4f4f4; }
.rw i { background: #fff; border-right-color: #a0a0a0; border-bottom-color: #a0a0a0; padding: 6px 0 0 4px; }
.rw i::before { content: ""; display: block; width: 0; border: 5px solid transparent; border-left-color: #000; border-right: 0; }
.void { flex: 1; }
.sb { height: 17px; background: #bfdbff; display: flex; flex: none; }
.sb .l, .sb .r { width: 17px; border: 1px solid #6593cf; display: grid; place-items: center; }
.sb .r { margin-left: auto; }
.thumb { width: var(--th); border: 1px solid #6593cf; }
.sb .l::before, .sb .r::before { content: ""; border: 4px solid transparent; }
.sb .l::before { border-right: 5px solid #000; border-left: 0; }
.sb .r::before { border-left: 5px solid #000; border-right: 0; }
.sign { display: grid; grid-template-columns: calc(var(--lab) - 5px) 1fr; margin: 5px 1px 0 7px; }
.sign .f { border-right: 0; }
.g1 .sign { grid-template-rows: 22px 22px 20px; }
.g1 .sign label:nth-of-type(3) { margin-top: -1px; }
.g2 .sign, .g3 .sign { margin-top: 4px; grid-template-rows: 21px 22px 20px; }
.g2 .sign .spin { width: 5px; }
.g4 .sign { margin-top: 6px; grid-template-rows: 23px 22px 20px; }

.et { height: 139px; margin-top: 5px; }
.et legend { color: #1b3f7f; }
.etg { padding: 2px 0 0 7px; display: grid; grid-template-columns: 76px 131px 95px 108px 41px 150px 108px 60px; grid-template-rows: 22px 22px 21px; }
.etg .f:not(.combo) { width: 99px; }
.etg .combo { grid-column: span 2; width: 127px; margin-top: -1px; }
.emb2 { margin-left: -1px; padding-top: 2px; }
.et4 { display: grid; grid-template-columns: 122px 64px 116px 127px; padding-left: 7px; height: 21px; }
.et4 .f:first-of-type { width: 53px; }
.et5 { display: grid; grid-template-columns: 76px 337px 38px 75px 1fr; padding-left: 7px; }
.et5 label:nth-of-type(2) { grid-column: 4; }
.last { border-right: 0; }

.dock { width: 784px; margin: 2px 0 0 1px; height: 924px; border: 1px solid #6593cf; padding: 2px 1px 0; flex: none; }
.dock .caption { margin: 0 2px 0 1px; }
.big { margin-top: 3px; height: 855px; background: #ababab; border: 1px solid #696969; border-right: 2px solid #fff; border-bottom: 2px solid #fff; }
.bighd { display: grid; grid-template-columns: 36px 42px 101px 64px 65px; width: 308px; height: 23px; font-size: 13.300px; line-height: 23px; color: #000; border-bottom: 1px solid #696969; border-right: 1px solid #696969; }
.bighd > * { background: #f0f0f0; border-right: 1px solid #a0a0a0; border-bottom: 1px solid #a0a0a0; padding-left: 4px; }
.dockbtns { display: flex; padding: 2px 0 0 159px; gap: 36px; }
.save { width: 56px; height: 28px; font-size: 11.500px; padding-left: 4px; }
.save .ico { width: 14px; height: 17px; margin-right: 7px; }
.ref { width: 24px; height: 24px; padding: 0 0 0 4px; }
.ref svg { width: 15px; height: 17px; }
.vtabs { padding-top: 7px; width: 21px; }
.vt { height: 64px; margin-bottom: 3px; display: flex; flex-direction: column; align-items: center; padding-top: 5px; border: 1px solid transparent; border-left: 0; }
.vt svg { width: 16px; height: 16px; flex: none; }
.vt span { writing-mode: vertical-rl; font: 11px/14px "DejaVu Sans", sans-serif; margin: 8px 0 0 2px; letter-spacing: -.3px; }
.vt.on { background: linear-gradient(#ffd8a8 0, #ffb457 40%, #ffe492 100%); border-color: #6593cf; border-radius: 0 3px 3px 0; color: #000; }

.tabs { height: 22px; display: flex; font-size: 11px; line-height: 20px; padding-left: 13px; flex: none; white-space: nowrap; }
.t1 { width: 72px; letter-spacing: -.15px; }
.t2 { width: 58px; }
.t3 { width: 163px; height: 21px; margin-top: -1px; padding-left: 7px; border: 1px solid #6593cf; border-top: 0; border-radius: 0 0 3px 3px; color: #000; background: linear-gradient(#ffd8a8 0, #ffcd8e 38%, #ffb457 42%, #ffe492 100%); letter-spacing: -.1px; }

.taskbar { height: 40px; background: #060b14; display: flex; color: #fff; font-family: "Open Sans", "Noto Sans Thai Looped", "Loma", "Garuda", "Noto Sans Thai", sans-serif; flex: none; }
.start { width: 48px; padding: 12px 0 0 16px; }
.start svg { width: 16px; height: 16px; }
.search { width: 344px; background: #f2f2f2; border-top: 1px solid #ccc; display: flex; align-items: center; color: #444; font-size: 14.500px; letter-spacing: -.3px; padding-left: 9px; }
.search span { flex: 1; }
.search svg { width: 12px; height: 18px; margin-right: 15px; }
.ring { width: 22px; height: 22px; border: 3px solid #000; border-radius: 50%; margin-right: 9px; }
.tv { width: 50px; padding: 11px 0 0 16px; }
.tv svg { width: 17px; height: 17px; }
.apps { display: flex; }
.apps:not(.five) { padding-left: 1px; }
.a { width: 40px; height: 40px; display: grid; place-items: center; border-bottom: 2px solid transparent; padding-top: 2px; }
.five .a { width: 41px; }
.a svg { width: 24px; height: 24px; }
.u { background: linear-gradient(#76b9ed, #76b9ed) center bottom / 31px 2px no-repeat; border: 0; padding-bottom: 2px; }
.active { background: linear-gradient(#76b9ed, #76b9ed) center bottom / 100% 2px no-repeat #3c4147; width: 37px; margin-left: 2px; }
.active svg { width: 21px; height: 21px; }
.ai { width: 21px; height: 21px; border: 2px solid #f7941e; background: #2d1800; color: #f7941e; font: bold 12px/17px "Open Sans", sans-serif; text-align: center; }
.qt { width: 19px; height: 18px; background: #41cd52; color: #fff; font: bold 11px/17px "Open Sans", sans-serif; text-align: center; border-radius: 3px 0 6px; }
.line { width: 24px; height: 24px; background: #00b900; border-radius: 5px; display: grid; place-items: center; }
.line span { width: 18px; height: 14px; border-radius: 50%; background: #fff; color: #00a000; font: bold 6px/14px "Liberation Sans", sans-serif; text-align: center; }
.tray { display: flex; align-items: center; padding-left: 25px; flex: 1; }
.tr { width: 16px; height: 16px; margin-right: 8px; flex: none; }
.tr:first-child { margin-right: 20px; }
.lang { width: 30px; font-size: 11px; margin-left: 5px; }
.clock { width: 66px; display: flex; flex-direction: column; text-align: center; font-size: 12px; line-height: 18px; letter-spacing: -.4px; }
.note { margin-left: 14px; position: relative; width: 24px; height: 24px; }
.note svg { width: 16px; height: 16px; margin-top: 4px; }
.note b { position: absolute; left: 7px; top: 9px; width: 16px; height: 16px; border: 1px solid #777; border-radius: 50%; background: #222; font: 11px/14px "Open Sans", sans-serif; text-align: center; }

.notes { position: absolute; left: 0; top: 0; width: 1920px; height: 1080px; pointer-events: none; }
.ann { font: 27px "DejaVu Sans Condensed", "Noto Sans Thai Looped", "Loma", "Garuda", "Noto Sans Thai", sans-serif; fill: #f00; }
```
